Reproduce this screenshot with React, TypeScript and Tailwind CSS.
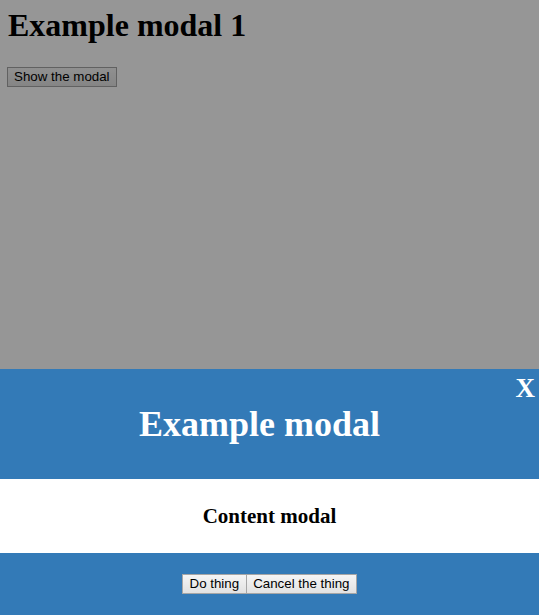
import { useState } from "react";

const btn =
  "h-[20px] px-[6.5px] border border-[#a6a6a6] bg-gradient-to-b from-[#f5f5f5] to-[#e2e2e2] text-black text-[13.33px] leading-none font-['Liberation_Sans',Arial,sans-serif]";

export default function App() {
  const [open, setOpen] = useState(true);

  return (
    <div className="relative min-h-screen bg-white font-['Liberation_Serif','Times_New_Roman',serif]">
      <div className="px-[8px] pt-[7px]">
        <h1 className="text-[32px] font-bold leading-[37px] text-black">
          Example modal 1
        </h1>
        <button
          className={`${btn} mt-[23px] -ml-[1px] !px-[6px]`}
          onClick={() => setOpen(true)}
        >
          Show the modal
        </button>
      </div>

      {open && (
        <>
          {/* Overlay */}
          <div className="fixed inset-0 bg-black/[0.41]" />

          {/* Modal */}
          <div className="fixed inset-x-0 bottom-0 flex flex-col">
            <div className="relative flex h-[110px] items-center justify-center bg-[#337ab7] pr-[20px]">
              <button
                className="absolute right-[4px] top-[6px] text-[27px] font-bold leading-none text-white"
                onClick={() => setOpen(false)}
              >
                X
              </button>
              <h2 className="text-[36px] font-bold leading-none text-white">
                Example modal
              </h2>
            </div>
            <div className="flex h-[74px] items-center justify-center bg-white">
              <h3 className="text-[21px] font-bold leading-none text-black">
                Content modal
              </h3>
            </div>
            <div className="flex h-[62px] items-center justify-center bg-[#337ab7]">
              <button className={btn}>Do thing</button>
              <button className={`${btn} -ml-[1px]`}>Cancel the thing</button>
            </div>
          </div>
        </>
      )}
    </div>
  );
}
